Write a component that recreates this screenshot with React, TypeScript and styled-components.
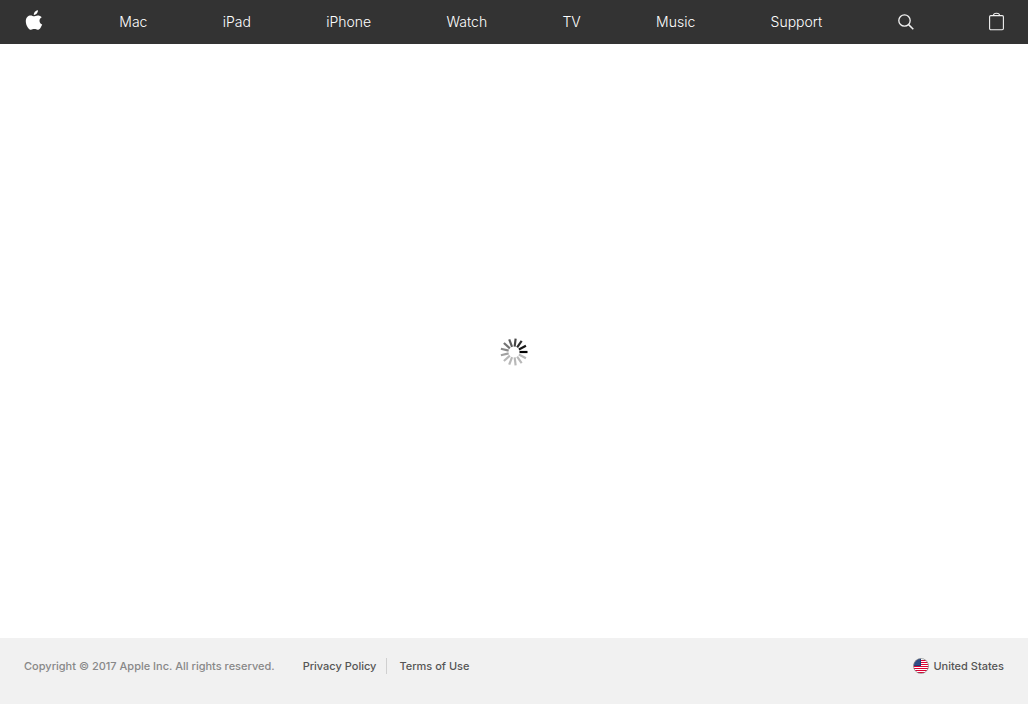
import React from "react";
import styled, { createGlobalStyle } from "styled-components";

const GlobalStyle = createGlobalStyle`
  *, *::before, *::after { box-sizing: border-box; }
  body {
    margin: 0;
    background: #fff;
    font-family: Inter, "Liberation Sans", sans-serif;
  }
`;

const Page = styled.div`
  display: flex;
  flex-direction: column;
  min-height: 100vh;
`;

const NavBar = styled.nav`
  background: #333;
`;

const NavList = styled.ul`
  display: flex;
  align-items: center;
  justify-content: space-between;
  height: 44px;
  margin: 0;
  padding: 0 24px;
  list-style: none;
`;

const NavItem = styled.li`
  display: flex;
`;

const NavLink = styled.a`
  display: flex;
  align-items: center;
  height: 44px;
  color: #fff;
  font-size: 14px;
  font-weight: 300;
  line-height: 44px;
  text-decoration: none;
`;

const NavButton = styled.button`
  display: flex;
  align-items: center;
  height: 44px;
  margin: 0;
  padding: 0;
  border: 0;
  background: none;
  color: #f2f2f2;
  cursor: pointer;
`;

const Content = styled.main`
  display: flex;
  flex: 1;
  align-items: center;
  justify-content: center;
  padding-top: 22px;
`;

const Footer = styled.footer`
  display: flex;
  align-items: flex-start;
  justify-content: space-between;
  padding: 20px 24px 30px;
  background: #f1f1f1;
  font-size: 11px;
  font-weight: 500;
  line-height: 16px;
`;

const Legal = styled.div`
  display: flex;
  gap: 28px;
`;

const Copyright = styled.span`
  color: #888;
`;

const LegalLinks = styled.div`
  display: flex;
`;

const FooterLink = styled.a<{ $divided?: boolean }>`
  display: flex;
  align-items: center;
  gap: 4px;
  margin-right: ${(p) => (p.$divided ? "12px" : "0")};
  padding-right: ${(p) => (p.$divided ? "10px" : "0")};
  border-right: ${(p) => (p.$divided ? "1px solid #d0d0d0" : "0")};
  color: #555;
  text-decoration: none;
`;

const sections = ["Mac", "iPad", "iPhone", "Watch", "TV", "Music", "Support"];

const AppleLogo = () => (
  <svg width="20" height="44" viewBox="0 0 20 44" fill="#fff" aria-hidden="true">
    <path d="M13.9 10.2c.1 1.2-.4 2.4-1.1 3.3-.8.9-1.9 1.5-3 1.4-.1-1.200.4-2.400 1.100-3.200.8-.9 2-1.500 3-1.500z" />
    <path d="M17.700 17.200c-1.400.9-2.200 2-2.200 3.500 0 1.700 1 3.200 2.700 3.900-.4 1.100-.9 2.100-1.600 3.100-.9 1.300-1.900 2.100-3 2.100-1.200 0-1.700-.7-3.300-.7-1.500 0-2.100.7-3.300.7-1.200 0-2.200-.9-3.200-2.300-1.300-1.900-2-4.100-2-6.200 0-3.800 2.400-5.800 4.900-5.800 1.300 0 2.400.8 3.200.8.8 0 2.100-.9 3.700-.9 1.700 0 3.200.6 4.100 1.800z" />
  </svg>
);

const SearchIcon = () => (
  <svg width="16" height="44" viewBox="0 0 16 44" fill="none" stroke="currentColor" aria-hidden="true">
    <circle cx="6.500" cy="20.500" r="5.700" strokeWidth="1.300" />
    <path d="M10.600 24.600l4.700 4.600" strokeWidth="1.500" />
  </svg>
);

const BagIcon = () => (
  <svg width="15" height="44" viewBox="0 0 15 44" fill="none" stroke="currentColor" aria-hidden="true">
    <rect x=".6" y="15.600" width="13.800" height="14.200" rx="1.200" strokeWidth="1.100" />
    <path d="M4.500 15.500v-.3c0-1.300 1.200-2 3-2s3 .7 3 2v.3" strokeWidth="1.100" />
  </svg>
);

const BAR_COUNT = 13;

const Spinner = () => (
  <svg width="28" height="28" viewBox="-14 -14 28 28" role="img" aria-label="Loading">
    {Array.from({ length: BAR_COUNT }, (_, i) => (
      <line
        key={i}
        x1="5.500"
        x2="13.500"
        stroke="#000"
        strokeWidth="2.200"
        strokeOpacity={Math.max(0.28, 1 - i * 0.09)}
        transform={`rotate(${(-360 / BAR_COUNT) * i})`}
      />
    ))}
  </svg>
);

const Flag = () => (
  <svg width="16" height="16" viewBox="0 0 16 16" aria-hidden="true">
    <defs>
      <clipPath id="flag-disc">
        <circle cx="8" cy="8" r="7.500" />
      </clipPath>
    </defs>
    <g clipPath="url(#flag-disc)">
      <rect width="16" height="16" fill="#fff" />
      <path
        d="M0 2.500h16M0 4.500h16M0 6.500h16M0 8.500h16M0 10.500h16M0 12.500h16M0 14.500h16"
        stroke="#dc0032"
        strokeWidth="1.200"
      />
      <rect width="8" height="8" fill="#1f3d7a" />
      {[1.5, 3.5, 5.5].map((y) =>
        [1.5, 3.5, 5.5].map((x) => (
          <circle key={`${x}-${y}`} cx={x + 0.5} cy={y + 0.5} r=".4" fill="#b9c6df" />
        ))
      )}
    </g>
    <circle cx="8" cy="8" r="7.500" fill="none" stroke="#888" strokeOpacity=".7" />
  </svg>
);

export default function App() {
  return (
    <Page>
      <GlobalStyle />
      <NavBar aria-label="Global">
        <NavList>
          <NavItem>
            <NavLink href="#apple" aria-label="Apple">
              <AppleLogo />
            </NavLink>
          </NavItem>
          {sections.map((name) => (
            <NavItem key={name}>
              <NavLink href={`#${name.toLowerCase()}`}>{name}</NavLink>
            </NavItem>
          ))}
          <NavItem>
            <NavButton type="button" aria-label="Search">
              <SearchIcon />
            </NavButton>
          </NavItem>
          <NavItem>
            <NavButton type="button" aria-label="Shopping Bag">
              <BagIcon />
            </NavButton>
          </NavItem>
        </NavList>
      </NavBar>
      <Content>
        <Spinner />
      </Content>
      <Footer>
        <Legal>
          <Copyright>Copyright © 2017 Apple Inc. All rights reserved.</Copyright>
          <LegalLinks>
            <FooterLink href="#privacy" $divided>
              Privacy Policy
            </FooterLink>
            <FooterLink href="#terms">Terms of Use</FooterLink>
          </LegalLinks>
        </Legal>
        <FooterLink href="#region">
          <Flag />
          United States
        </FooterLink>
      </Footer>
    </Page>
  );
}
